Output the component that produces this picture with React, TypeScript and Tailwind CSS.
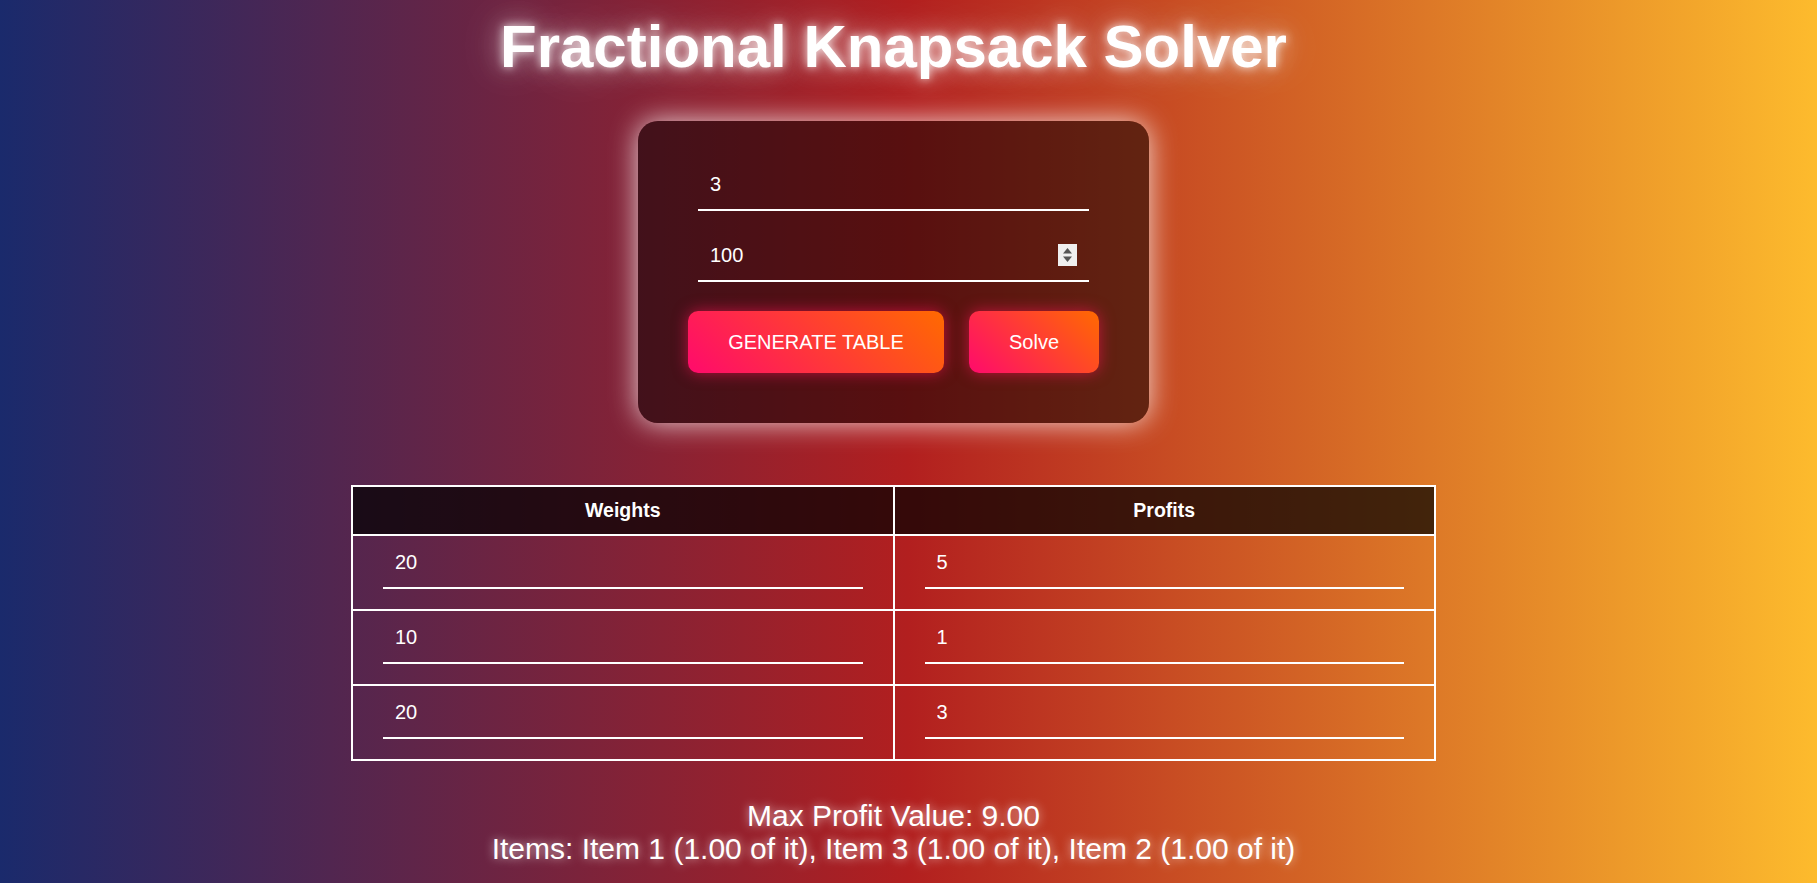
import React, { useState } from 'react';

type Row = { weight: string; profit: string };

const solveKnapsack = (rows: Row[], capacity: number) => {
  const items = rows.map((r, idx) => ({
    idx: idx + 1,
    w: parseFloat(r.weight) || 0,
    p: parseFloat(r.profit) || 0,
  }));
  items.sort((a, b) => b.p / b.w - a.p / a.w);
  let left = capacity;
  let total = 0;
  const taken: string[] = [];
  for (const it of items) {
    if (left <= 0 || it.w <= 0) continue;
    const frac = Math.min(1, left / it.w);
    total += it.p * frac;
    left -= it.w * frac;
    taken.push(`Item ${it.idx} (${frac.toFixed(2)} of it)`);
  }
  return { total: total.toFixed(2), items: taken.join(', ') };
};

const LineInput: React.FC<{ value: string; onChange: (v: string) => void; className?: string }> = ({ value, onChange, className }) => (
  <input
    type="text"
    value={value}
    onChange={(e) => onChange(e.target.value)}
    className={`block h-[52px] w-full bg-transparent border-0 border-b-2 border-white px-3 text-[20px] text-white outline-none ${className ?? ''}`}
  />
);

export default function App() {
  const [count, setCount] = useState('3');
  const [capacity, setCapacity] = useState('100');
  const [rows, setRows] = useState<Row[]>([
    { weight: '20', profit: '5' },
    { weight: '10', profit: '1' },
    { weight: '20', profit: '3' },
  ]);
  const [result, setResult] = useState(() => solveKnapsack(rows, 100));

  const generateTable = () => {
    const n = Math.max(0, parseInt(count) || 0);
    setRows(Array.from({ length: n }, (_, i) => rows[i] ?? { weight: '', profit: '' }));
  };

  const updateRow = (i: number, key: keyof Row, v: string) => {
    setRows(rows.map((r, idx) => (idx === i ? { ...r, [key]: v } : r)));
  };

  return (
    <div className="min-h-screen w-full bg-[linear-gradient(to_right,#1a2a6c,#b21f1f,#fdbb2d)] font-['Liberation_Sans',Arial,sans-serif] text-white">
      <div className="flex flex-col items-center pt-[12px] pr-[30px] pb-4">
        <h1 className="text-[60px] font-bold leading-[69px] [text-shadow:0_0_10px_rgba(255,255,255,0.85),0_0_25px_rgba(255,255,255,0.55),0_0_45px_rgba(255,255,255,0.35)]">
          Fractional Knapsack Solver
        </h1>

        <div className="mt-[40px] w-[511px] rounded-[20px] bg-black/50 px-[60px] pt-[38px] pb-[50px] shadow-[0_0_28px_rgba(255,255,255,0.8)]">
          <LineInput value={count} onChange={setCount} className="mb-[19px]" />
          <div className="relative mb-[29px]">
            <LineInput value={capacity} onChange={setCapacity} />
            <div className="absolute right-3 top-[14px] h-[22px] w-[19px] bg-[#efefef]">
              <svg width="19" height="22" viewBox="0 0 19 22">
                <polygon points="5,9.5 9.5,4 14,9.5" fill="#555" />
                <polygon points="5,12.5 14,12.5 9.5,18" fill="#555" />
              </svg>
            </div>
          </div>
          <div className="-mx-[10px] flex gap-[25px]">
            <button
              onClick={generateTable}
              className="h-[62px] w-[256px] rounded-[10px] bg-[linear-gradient(45deg,#ff0a6c,#ff6a00)] text-[20px] text-white shadow-[0_0_15px_rgba(255,20,90,0.6)]"
            >
              GENERATE TABLE
            </button>
            <button
              onClick={() => setResult(solveKnapsack(rows, parseFloat(capacity) || 0))}
              className="h-[62px] w-[130px] rounded-[10px] bg-[linear-gradient(45deg,#ff0a6c,#ff6a00)] text-[20px] text-white shadow-[0_0_15px_rgba(255,20,90,0.6)]"
            >
              Solve
            </button>
          </div>
        </div>

        <table className="mt-[62px] w-[1085px] border-collapse table-fixed">
          <thead>
            <tr>
              <th className="h-[49px] border-2 border-white bg-black/70 text-[19.5px] font-bold">Weights</th>
              <th className="h-[49px] border-2 border-white bg-black/70 text-[19.5px] font-bold">Profits</th>
            </tr>
          </thead>
          <tbody>
            {rows.map((r, i) => (
              <tr key={i}>
                <td className="border-2 border-white px-[30px] pt-[1px] pb-[20px]">
                  <LineInput value={r.weight} onChange={(v) => updateRow(i, 'weight', v)} />
                </td>
                <td className="border-2 border-white px-[30px] pt-[1px] pb-[20px]">
                  <LineInput value={r.profit} onChange={(v) => updateRow(i, 'profit', v)} />
                </td>
              </tr>
            ))}
          </tbody>
        </table>

        <div className="mt-[38px] text-center text-[30px] leading-[33px] [text-shadow:0_0_10px_rgba(255,255,255,0.7)]">
          <p>Max Profit Value: {result.total}</p>
          <p>Items: {result.items}</p>
        </div>
      </div>
    </div>
  );
}
